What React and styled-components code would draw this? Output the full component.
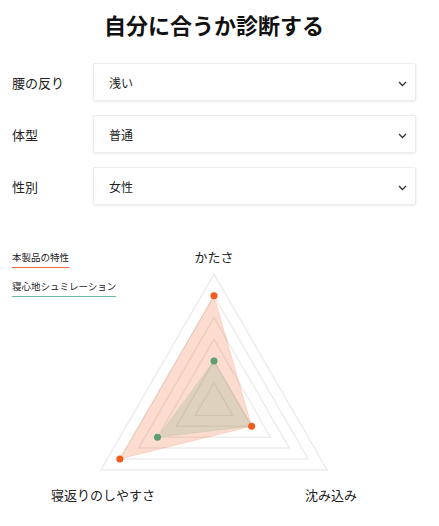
import React, { useState } from "react";
import styled, { createGlobalStyle } from "styled-components";

const GlobalStyle = createGlobalStyle`
  body {
    margin: 0;
    background: #fff;
    font-family: "Noto Sans CJK JP", "Noto Sans", sans-serif;
    color: #222;
  }
`;

const Page = styled.div`
  width: 428px;
  box-sizing: border-box;
  padding: 0 12px;
`;

const Title = styled.h1`
  margin: 0;
  padding-top: 8px;
  font-size: 22px;
  line-height: 32px;
  font-weight: 700;
  text-align: center;
  color: #111;
`;

const Form = styled.div`
  margin-top: 23px;
  display: flex;
  flex-direction: column;
  gap: 14px;
`;

const Row = styled.div`
  display: grid;
  grid-template-columns: 81px 1fr;
  align-items: center;
  height: 38px;
`;

const Label = styled.label`
  font-size: 13px;
  color: #222;
`;

const SelectWrap = styled.div`
  position: relative;
  height: 38px;
`;

const Select = styled.select`
  appearance: none;
  width: 100%;
  height: 100%;
  box-sizing: border-box;
  padding: 0 30px 0 15px;
  border: 1px solid #ececec;
  border-radius: 2px;
  box-shadow: 0 1px 3px rgba(0, 0, 0, 0.08);
  background: #fff;
  font-family: inherit;
  font-size: 12px;
  color: #222;
  outline: none;
`;

const Chevron = styled.svg`
  position: absolute;
  right: 9px;
  top: 18px;
  pointer-events: none;
`;

const ChartWrap = styled.div`
  position: relative;
  margin: 34px -12px 0;
  height: 286px;
`;

const Legend = styled.div`
  position: absolute;
  left: 12px;
  top: 12px;
  display: flex;
  flex-direction: column;
  align-items: flex-start;
  gap: 12px;
`;

const LegendItem = styled.span`
  font-size: 9.5px;
  line-height: 12px;
  padding-bottom: 4px;
  border-bottom: 1.5px solid ${(p) => p.$line};
  color: #222;
`;

const AxisText = styled.text`
  font-size: 13px;
  fill: #222;
`;

const fields = [
  { label: "腰の反り", options: ["浅い", "普通", "深い"], value: "浅い" },
  { label: "体型", options: ["細め", "普通", "がっしり"], value: "普通" },
  { label: "性別", options: ["男性", "女性"], value: "女性" },
];

const CX = 214;
const CY = 165.5;
const R = 130.5;
const STEPS = 6;
const angles = [-90, 150, 30];

const pt = (i, v) => {
  const a = (angles[i] * Math.PI) / 180;
  const r = (R * v) / STEPS;
  return [CX + r * Math.cos(a), CY + r * Math.sin(a)];
};

const poly = (vals) => vals.map((v, i) => pt(i, v).join(",")).join(" ");

const product = [5, 5, 2];
const sim = [2, 3, 2];

const RadarChart = () => (
  <svg width="428" height="286" viewBox="0 0 428 286">
    {[1, 2, 3, 4, 5, 6].map((s) => (
      <polygon key={s} points={poly([s, s, s])} fill="none" stroke="#ededed" strokeWidth="1.5" />
    ))}
    <polygon points={poly(product)} fill="rgba(240,90,30,0.21)" stroke="rgba(240,90,30,0.15)" strokeWidth="1" />
    <polygon points={poly(sim)} fill="rgba(90,158,110,0.18)" stroke="rgba(90,158,110,0.12)" strokeWidth="1" />
    {product.map((v, i) => {
      const [x, y] = pt(i, v);
      return <circle key={"p" + i} cx={x} cy={y} r="3.5" fill="#f25a1c" />;
    })}
    {sim.map((v, i) => {
      if (i === 2) return null;
      const [x, y] = pt(i, v);
      return <circle key={"s" + i} cx={x} cy={y} r="3.5" fill="#5d9e72" />;
    })}
    <AxisText x="214" y="17" textAnchor="middle" dominantBaseline="central">かたさ</AxisText>
    <AxisText x="103" y="255" textAnchor="middle" dominantBaseline="central">寝返りのしやすさ</AxisText>
    <AxisText x="331" y="255" textAnchor="middle" dominantBaseline="central">沈み込み</AxisText>
  </svg>
);

const App = () => {
  const [values, setValues] = useState(fields.map((f) => f.value));

  return (
    <Page>
      <GlobalStyle />
      <Title>自分に合うか診断する</Title>
      <Form>
        {fields.map((f, i) => (
          <Row key={f.label}>
            <Label>{f.label}</Label>
            <SelectWrap>
              <Select
                value={values[i]}
                onChange={(e) => setValues(values.map((v, j) => (j === i ? e.target.value : v)))}
              >
                {f.options.map((o) => (
                  <option key={o}>{o}</option>
                ))}
              </Select>
              <Chevron width="9" height="6" viewBox="0 0 9 6">
                <path d="M1 1 L4.5 4.5 L8 1" fill="none" stroke="#333" strokeWidth="1.3" />
              </Chevron>
            </SelectWrap>
          </Row>
        ))}
      </Form>
      <ChartWrap>
        <RadarChart />
        <Legend>
          <LegendItem $line="#f26b3a">本製品の特性</LegendItem>
          <LegendItem $line="#6cb898">寝心地シュミレーション</LegendItem>
        </Legend>
      </ChartWrap>
    </Page>
  );
};

export default App;
